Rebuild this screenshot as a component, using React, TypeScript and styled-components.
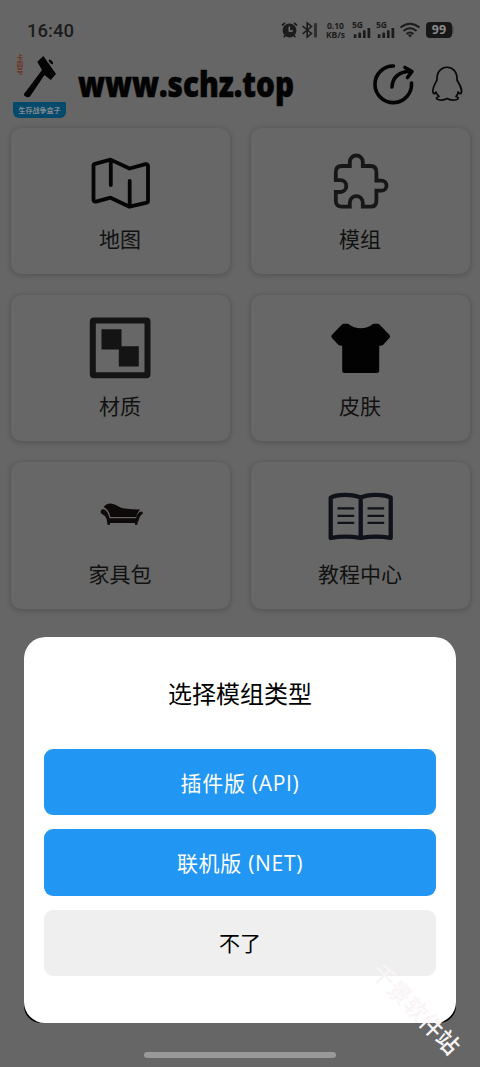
import React from 'react';
import styled, { createGlobalStyle } from 'styled-components';

const GlobalStyle = createGlobalStyle`
  * { box-sizing: border-box; }
  body {
    margin: 0;
    background: #666;
    font-family: "Open Sans", "Noto Sans CJK SC", sans-serif;
    overflow: hidden;
  }
`;

const Screen = styled.div`
  position: relative;
  width: 480px;
  height: 1067px;
  overflow: hidden;
  background: #666;
`;

const StatusBar = styled.div`
  display: flex;
  align-items: center;
  justify-content: space-between;
  height: 50px;
  padding: 10px 26px 0 27px;
  color: #1c1c1c;
`;

const Clock = styled.div`
  padding-top: 1px;
  font: 500 18.5px/22px Roboto, sans-serif;
`;

const StatusIcons = styled.div`
  display: flex;
  align-items: center;
  height: 20px;
`;

const StatusGlyph = styled.svg`
  display: block;
  margin-left: 3px;
`;

const Rate = styled.div`
  display: flex;
  flex-direction: column;
  align-items: center;
  width: 21px;
  margin-left: 6px;
  font: 700 8.5px/9px "Noto Sans", sans-serif;
  white-space: nowrap;
`;

const SignalBox = styled.div<{ $gap: number }>`
  display: flex;
  flex-direction: column;
  width: 20px;
  height: 22px;
  margin-left: ${(p) => p.$gap}px;
  padding-bottom: 3px;
  font: 700 8.5px/11px "Noto Sans", sans-serif;
  svg { display: block; margin-top: -3px; }
`;

const Battery = styled.div`
  width: 26px;
  height: 16px;
  margin-left: 5px;
  border-radius: 4px;
  background: #171717;
  color: #8a8a8a;
  font: 700 12.5px/16px "Noto Sans", sans-serif;
  text-align: center;
`;

const Header = styled.header`
  display: flex;
  height: 77px;
`;

const Logo = styled.div`
  display: flex;
  flex-direction: column;
  width: 53px;
  height: 68px;
  margin: 0 0 0 13px;
`;

const LogoTop = styled.div`
  display: flex;
  height: 52px;
  flex: none;
`;

const LogoTag = styled.div`
  width: 11px;
  padding: 4px 0 0 2px;
  color: #6e3423;
  font: 700 6.5px/9px "Noto Sans CJK SC", sans-serif;
  letter-spacing: 0.6px;
  writing-mode: vertical-rl;
  white-space: nowrap;
`;

const LogoBanner = styled.div`
  height: 16px;
  border-radius: 1px 1px 6px 6px;
  background: #044a6d;
  color: #858b8e;
  font: 700 7px/16px "Noto Sans CJK SC", sans-serif;
  text-align: center;
  white-space: nowrap;
`;

const SiteName = styled.svg`
  display: block;
  margin-left: 10px;
  overflow: visible;
`;

const HeaderActions = styled.div`
  display: flex;
  gap: 14px;
  margin-left: auto;
  padding: 12px 15px 0 0;
`;

const Grid = styled.main`
  display: grid;
  grid-template-columns: 219px 219px;
  grid-auto-rows: 146.6px;
  gap: 20.8px 21px;
  padding: 0.5px 0 0 11px;
`;

const Card = styled.section`
  display: flex;
  flex-direction: column;
  align-items: center;
  padding-top: 21.5px;
  border-radius: 10px;
  background: #676767;
  box-shadow: 0 1px 5px 1px rgba(0, 0, 0, 0.17);
`;

const CardIcon = styled.svg`
  display: block;
  width: 66px;
  height: 66px;
`;

const CardLabel = styled.div`
  margin-top: 9px;
  padding-right: 1px;
  color: #111;
  font-size: 21px;
  line-height: 30px;
`;

const SheetBacking = styled.div`
  position: absolute;
  left: 24px;
  top: 636.5px;
  width: 432px;
  height: 386.5px;
  border-radius: 21px 21px 17px 17px;
  background: #000;
`;

const Sheet = styled.div`
  display: flex;
  flex-direction: column;
  gap: 14px;
  height: 100%;
  padding: 0 20px;
  border-radius: 21px;
  background: #fff;
`;

const SheetTitle = styled.h2`
  margin: 0;
  height: 98.5px;
  padding-top: 39px;
  color: #000;
  font-size: 24px;
  font-weight: 400;
  line-height: 36px;
  text-align: center;
`;

const Choice = styled.button<{ $primary?: boolean }>`
  height: 66.4px;
  flex: none;
  padding: 1px 0 0;
  border: 0;
  border-radius: 9px;
  background: ${(p) => (p.$primary ? '#2196f3' : '#efefef')};
  color: ${(p) => (p.$primary ? '#fff' : '#000')};
  font: 400 21px/30px "Open Sans", "Noto Sans CJK SC", sans-serif;
  letter-spacing: ${(p) => (p.$primary ? '0.7px' : '0')};
`;

const HomeBar = styled.div`
  position: absolute;
  left: 144px;
  top: 1052px;
  width: 192px;
  height: 6px;
  border-radius: 3px;
  background: #999;
`;

const Watermark = styled.div`
  position: absolute;
  left: 357px;
  top: 992px;
  width: 120px;
  color: #f9f5f7;
  font: 500 23px/32px "Noto Sans CJK SC", sans-serif;
  text-align: center;
  white-space: nowrap;
  transform: rotate(46deg);
`;

const Signal = ({ gap }: { gap: number }) => (
  <SignalBox $gap={gap}>
    5G
    <svg width="20" height="12" viewBox="0 0 20 12" fill="#1c1c1c">
      <rect x="1" y="8" width="3" height="4" rx=".6" />
      <rect x="6" y="6" width="3" height="6" rx=".6" />
      <rect x="11" y="3.500" width="3" height="8.500" rx=".6" />
      <rect x="16" y="1" width="3" height="11" rx=".6" />
    </svg>
  </SignalBox>
);

const MapIcon = () => (
  <CardIcon viewBox="0 0 66 66" fill="none" stroke="#050505" strokeWidth="3.800" strokeLinecap="round" strokeLinejoin="round">
    <path d="M7 14.800 22.500 10.600 41.500 19.500 57.500 15.200Q60 14.800 60 17V52.500Q60 53.300 59 53.600L41.500 57.700 22.500 48.700 8 52.600Q5.500 53 5.500 50.700V16.500Q5.500 15.200 7 14.800ZM22.800 12V36M41.700 32V57" />
  </CardIcon>
);

const PuzzleIcon = () => (
  <CardIcon viewBox="0 0 66 66" fill="none" stroke="#171717" strokeWidth="3.800">
    <path d="M7.800 31.200V23Q7.800 17 13.800 17H21.800V13A6.500 6.500 0 0 1 34.800 13V17H42.500Q48.400 17 48.400 23V31.700H53.500A5 5 0 0 1 53.500 41.700H48.400V51.700Q48.400 57.700 42.500 57.700H34.800V53.600A6.500 6.500 0 0 0 21.800 53.600V57.700H13.800Q7.800 57.700 7.800 51.700V43H12.400A5.900 5.900 0 0 0 12.400 31.200Z" />
  </CardIcon>
);

const TextureIcon = () => (
  <CardIcon viewBox="0 0 66 66">
    <rect x="4.800" y="4.600" width="54.700" height="54.700" rx="1" fill="none" stroke="#141414" strokeWidth="6" />
    <path d="M13.500 13.300H33.500V30.300H50.800V50.600H30.800V33.600H13.500Z" fill="#141414" />
  </CardIcon>
);

const ShirtIcon = () => (
  <CardIcon viewBox="0 0 66 66">
    <path d="M15.500 7.800 20 7.700Q32.700 17 45.500 7.700L50 7.800Q51 8 52 9L61.500 19Q62.800 20.500 61.500 21.800L55.500 28.500Q54.500 29.800 51.200 29.800V54.500Q51.200 57 48.700 57H16.700Q14.200 57 14.200 54.500V29.800Q11 29.800 10 28.500L3.800 21.800Q2.700 20.500 3.800 19L13.500 9Q14.500 8 15.500 7.800Z" fill="#020202" />
  </CardIcon>
);

const SofaIcon = () => (
  <CardIcon viewBox="0 0 66 66" fill="#0d0a09">
    <path d="M15.500 23Q19 19 24 19.700C29 20.500 31 24 37 24.600Q43 25.500 52 25.500Q49.500 28 48.200 33H22.300Q21.500 26 15.500 23Z" />
    <path d="M14 25.200Q19.500 24.500 21.500 34.200H48Q49.300 28.500 53 27.500Q55.500 27.500 54.500 30Q51.500 31.500 50.500 37L49.500 38.500V40.800H47V39H22V40.800H19.300V38.500L18.300 34Q17 31 13.500 29.800Q11.500 27.500 14 25.200Z" />
  </CardIcon>
);

const BookIcon = () => (
  <CardIcon viewBox="0 0 66 66" fill="none" stroke="#10121a">
    <path d="M2.700 54V13.700Q7 10.800 17 10.800T32.700 13.700Q38 10.800 48 10.800T62.700 13.700V54Q48 51.200 32.700 54Q17.500 51.200 2.700 54ZM32.700 13.700V54" strokeWidth="4.300" strokeLinejoin="round" />
    <path d="M9.500 24.400H26.200M9.500 31.800H26.200M9.500 38.900H26.200M39.500 24.400H56.200M39.500 31.800H56.200M39.500 38.900H56.200" strokeWidth="2.200" />
  </CardIcon>
);

const cards = [
  { label: '地图', Icon: MapIcon },
  { label: '模组', Icon: PuzzleIcon },
  { label: '材质', Icon: TextureIcon },
  { label: '皮肤', Icon: ShirtIcon },
  { label: '家具包', Icon: SofaIcon },
  { label: '教程中心', Icon: BookIcon },
];

export default function App() {
  return (
    <>
      <GlobalStyle />
      <Screen>
        <StatusBar>
          <Clock>16:40</Clock>
          <StatusIcons>
            <svg width="17" height="18" viewBox="0 0 17 18" fill="none" stroke="#1c1c1c">
              <circle cx="8.500" cy="9.500" r="6.900" fill="#1c1c1c" stroke="none" />
              <path d="M1 4.500 4 1.800M13 1.800 16 4.500M4 14.500 2.800 16.300M13 14.500 14.200 16.300" strokeWidth="1.700" />
              <path d="M8.300 5.500V10H11.800" stroke="#777" strokeWidth="1.400" />
            </svg>
            <StatusGlyph width="18" height="18" viewBox="0 0 18 18" fill="none" stroke="#1c1c1c" strokeWidth="1.600">
              <path d="M1.500 5 10.500 12.500 6.200 16V2L10.500 5.500 1.500 13" />
              <rect x="13" y="2" width="3" height="14.500" rx="1" fill="#303030" stroke="none" />
            </StatusGlyph>
            <Rate><span>0.10</span><span>KB/s</span></Rate>
            <Signal gap={6} />
            <Signal gap={4} />
            <StatusGlyph width="22" height="18" viewBox="0 0 22 18" fill="none" stroke="#1c1c1c" strokeWidth="2">
              <path d="M1.500 6.500Q11-1 20.500 6.500M4.500 9.900Q11 4.500 17.500 9.900M7.500 13Q11 10 14.500 13" />
              <path d="M8.500 13.500H13.500L11 16.500Z" fill="#1c1c1c" stroke="none" />
            </StatusGlyph>
            <Battery>99</Battery>
            <svg width="2" height="8"><rect width="1.500" height="8" rx=".7" fill="#444" /></svg>
          </StatusIcons>
        </StatusBar>

        <Header>
          <Logo>
            <LogoTop>
              <LogoTag>卡四号</LogoTag>
              <svg width="42" height="52" viewBox="11 0 42 52" fill="#030303" overflow="visible">
                <path d="M24.300 11.700 30.300 6 43 24 37.700 30 31.500 25 17 46.500Q15.500 48 13 46.800 10.500 46 11 44L27.700 21.700 29 20Z" />
                <path d="M36 10Q39.500 10 39.700 14L37 12.500Z" stroke="#030303" />
              </svg>
            </LogoTop>
            <LogoBanner>生存战争盒子</LogoBanner>
          </Logo>
          <SiteName width="220" height="64" viewBox="0 0 220 64">
            <text x="2" y="47" fontFamily="Open Sans" fontSize="35.500" fontWeight="800" textLength="216" lengthAdjust="spacingAndGlyphs" fill="#030303" stroke="#030303" strokeWidth=".6">www.schz.top</text>
          </SiteName>
          <HeaderActions>
            <svg width="44" height="44" viewBox="0 0 44 44" fill="none" stroke="#030303" strokeWidth="3.600" strokeLinecap="round" strokeLinejoin="round">
              <path d="M22.500 4A18.300 18.300 0 1 0 40.500 21" />
              <path d="M21 25Q22 10 40 9M34 5.500 41 9.500 36.500 15.500" />
            </svg>
            <svg width="36" height="44" viewBox="0 0 36 44" fill="none" stroke="#080808" strokeWidth="1.700" strokeLinejoin="round">
              <path d="M8 18C7 1 29 1 28 18C31 23 34 28 32 31.500Q30 32 29 30Q29 33 27 34.500Q31 36 28 37.500Q22 39 18 36.500Q14 39 9 37.500Q5.500 36 10 34.500Q8 33 7 30Q6 32 4.500 31.500C2 28 6 22 8 18Z" />
            </svg>
          </HeaderActions>
        </Header>

        <Grid>
          {cards.map(({ label, Icon }) => (
            <Card key={label}>
              <Icon />
              <CardLabel>{label}</CardLabel>
            </Card>
          ))}
        </Grid>

        <SheetBacking>
          <Sheet>
            <SheetTitle>选择模组类型</SheetTitle>
            <Choice $primary>插件版 (API)</Choice>
            <Choice $primary>联机版 (NET)</Choice>
            <Choice>不了</Choice>
          </Sheet>
        </SheetBacking>
        <HomeBar />
        <Watermark>千景软件站</Watermark>
      </Screen>
    </>
  );
}
